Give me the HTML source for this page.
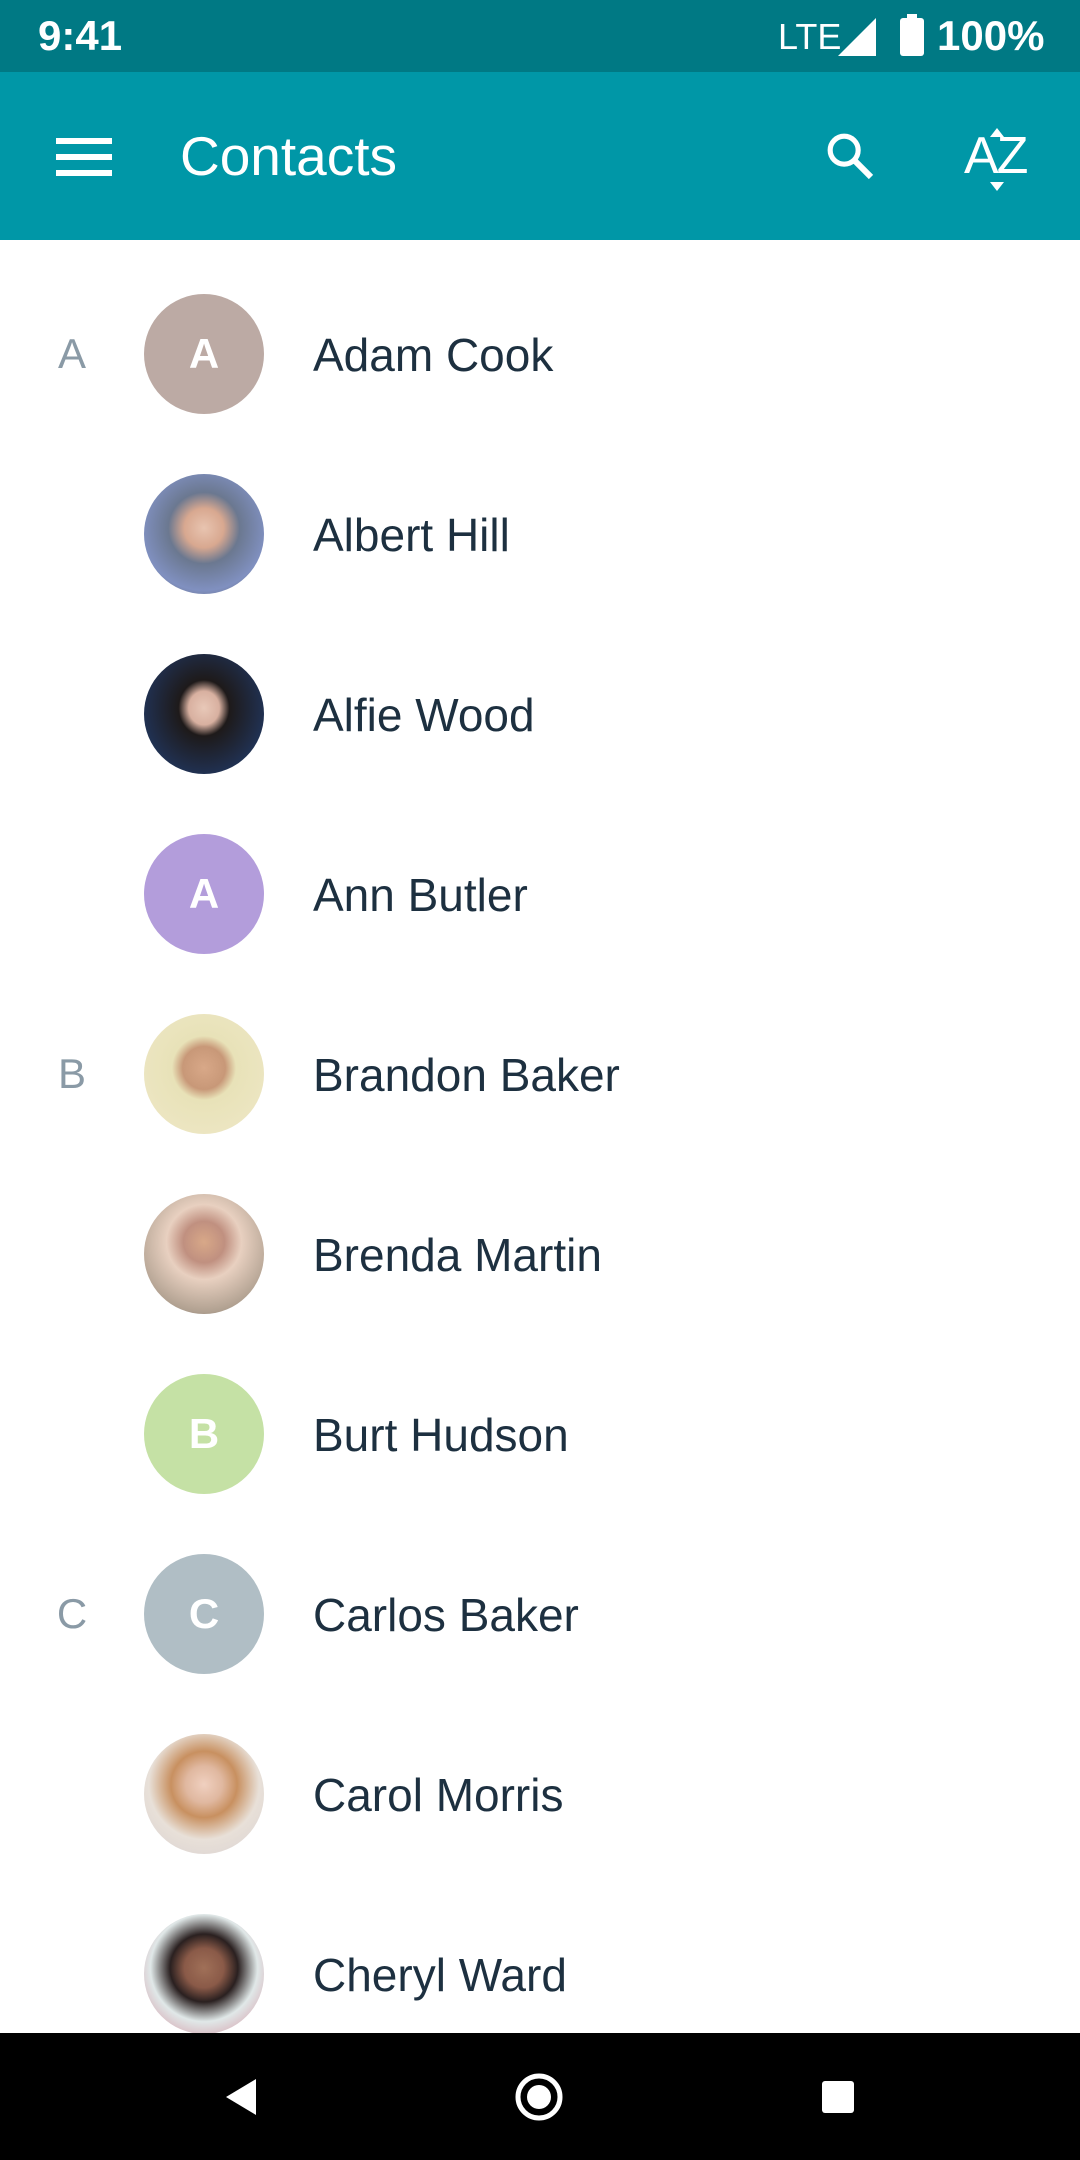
<!DOCTYPE html>
<html><head><meta charset="utf-8"><style>
*{margin:0;padding:0;box-sizing:border-box}
body{width:1080px;height:2160px;background:#fff;font-family:"Liberation Sans",Roboto,sans-serif;position:relative;overflow:hidden}
.sb{position:absolute;top:0;left:0;width:1080px;height:72px;background:#007984;color:#fff}
.ab{position:absolute;top:72px;left:0;width:1080px;height:168px;background:#0097a7;color:#fff}
.row{position:absolute;left:0;width:1080px;height:180px}
.sec{position:absolute;left:56px;width:32px;text-align:center;font-size:42px;color:#8a9aa6;top:66px}
.av{position:absolute;left:144px;top:30px;width:120px;height:120px;border-radius:50%;color:#fff;font-size:42px;font-weight:bold;text-align:center;line-height:120px;overflow:hidden}
.nm{position:absolute;left:313px;top:64px;font-size:46px;color:#1d3040}
.nav{position:absolute;left:0;top:2033px;width:1080px;height:127px;background:#000}
</style></head><body>
<div class="sb">
<div style="position:absolute;left:38px;top:12px;font-size:42px;font-weight:bold">9:41</div>
<div style="position:absolute;left:778px;top:16px;font-size:36px">LTE</div>
<svg style="position:absolute;left:838px;top:18px" width="40" height="38"><polygon points="38,0 38,38 0,38" fill="#fff"/></svg>
<svg style="position:absolute;left:900px;top:14px" width="24" height="42"><rect x="7" y="0" width="10" height="5" fill="#fff"/><rect x="0" y="4" width="24" height="38" rx="3" fill="#fff"/></svg>
<div style="position:absolute;left:937px;top:12px;font-size:42px;font-weight:bold">100%</div>
</div>
<div class="ab">
<svg style="position:absolute;left:56px;top:66px" width="56" height="38"><rect y="0" width="56" height="6" fill="#fff"/><rect y="16" width="56" height="6" fill="#fff"/><rect y="32" width="56" height="6" fill="#fff"/></svg>
<div style="position:absolute;left:180px;top:52px;font-size:55px">Contacts</div>
<svg style="position:absolute;left:822px;top:56px" width="56" height="56" viewBox="0 0 24 24"><circle cx="9.5" cy="9.5" r="6" fill="none" stroke="#fff" stroke-width="2.2"/><line x1="14" y1="14" x2="21" y2="21" stroke="#fff" stroke-width="2.6"/></svg>
<div style="position:absolute;left:964px;top:54px;font-size:52px;letter-spacing:-2px">AZ</div>
<svg style="position:absolute;left:990px;top:56px" width="14" height="64"><polygon points="7,0 14,9 0,9" fill="#fff"/><polygon points="0,54 14,54 7,63" fill="#fff"/></svg>
</div>

<div class="row" style="top:264px"><div class="sec">A</div><div class="av" style="background:#bcaaa4">A</div><div class="nm">Adam Cook</div></div>
<div class="row" style="top:444px"><div class="av" style="background:radial-gradient(circle at 50% 45%,#e8c4b0 0,#d8a890 22%,#6b7890 40%,#8090c0 70%,#5a5a60 100%)"></div><div class="nm">Albert Hill</div></div>
<div class="row" style="top:624px"><div class="av" style="background:radial-gradient(ellipse at 50% 45%,#e8c8b8 0,#d8b0a0 18%,#1e1a1a 30%,#203050 70%,#2a4a70 100%)"></div><div class="nm">Alfie Wood</div></div>
<div class="row" style="top:804px"><div class="av" style="background:#b39ddb">A</div><div class="nm">Ann Butler</div></div>
<div class="row" style="top:984px"><div class="sec">B</div><div class="av" style="background:radial-gradient(circle at 50% 45%,#d8a888 0,#c89878 24%,#e8e2b8 36%,#efe8c8 100%)"></div><div class="nm">Brandon Baker</div></div>
<div class="row" style="top:1164px"><div class="av" style="background:radial-gradient(circle at 50% 40%,#d8a888 0,#c09080 22%,#e8d0c0 40%,#b0a090 75%,#3a3030 100%)"></div><div class="nm">Brenda Martin</div></div>
<div class="row" style="top:1344px"><div class="av" style="background:#c5e1a5">B</div><div class="nm">Burt Hudson</div></div>
<div class="row" style="top:1524px"><div class="sec">C</div><div class="av" style="background:#b0bec5">C</div><div class="nm">Carlos Baker</div></div>
<div class="row" style="top:1704px"><div class="av" style="background:radial-gradient(circle at 50% 42%,#f0d0c0 0,#e0b8a0 20%,#c89060 36%,#e8e0d8 60%,#d8d0d0 100%)"></div><div class="nm">Carol Morris</div></div>
<div class="row" style="top:1884px"><div class="av" style="background:radial-gradient(circle at 50% 45%,#a07058 0,#8a5a48 22%,#2a2020 38%,#e0e8e8 60%,#d08090 100%)"></div><div class="nm">Cheryl Ward</div></div>

<div class="nav">
<svg style="position:absolute;left:224px;top:44px" width="36" height="40"><polygon points="32,2 32,38 2,20" fill="#fff"/></svg>
<svg style="position:absolute;left:514px;top:39px" width="50" height="50"><circle cx="25" cy="25" r="21" fill="none" stroke="#fff" stroke-width="5"/><circle cx="25" cy="25" r="12" fill="#fff"/></svg>
<div style="position:absolute;left:822px;top:48px;width:32px;height:32px;background:#fff;border-radius:3px"></div>
</div>
</body></html>
